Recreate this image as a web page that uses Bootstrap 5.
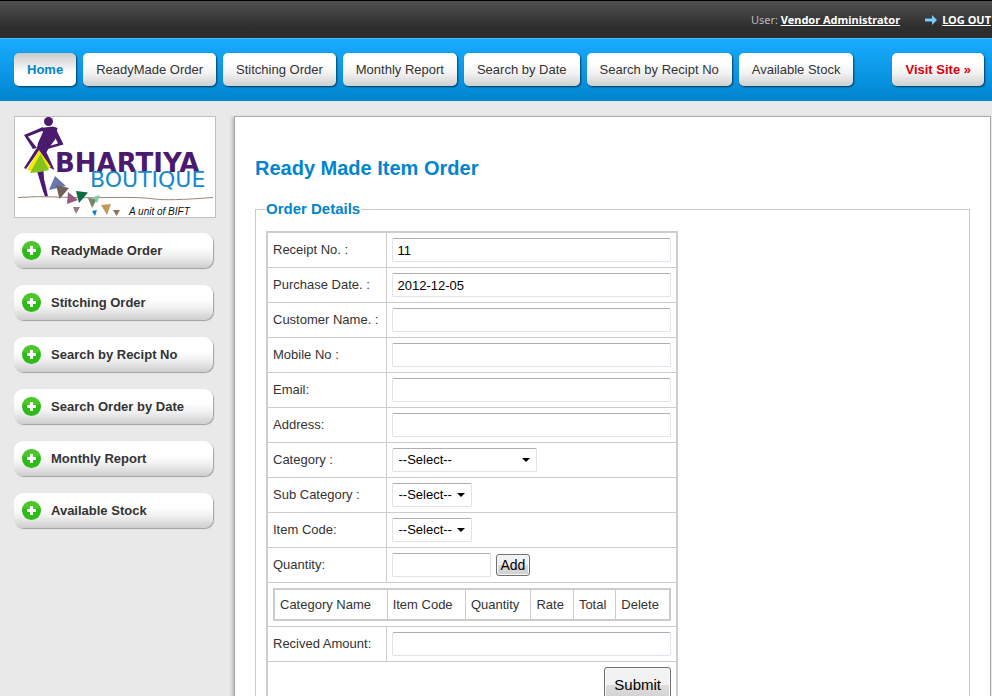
<!DOCTYPE html>
<html lang="en">
<head>
<meta charset="utf-8">
<meta name="viewport" content="width=device-width, initial-scale=1">
<title>Bhartiya Boutique - Ready Made Item Order</title>
<link href="https://cdn.jsdelivr.net/npm/bootstrap@5.3.0/dist/css/bootstrap.min.css" rel="stylesheet">
<style>
body { background: #e9e9e9; color: #333; font-family: "Liberation Sans", Arial, sans-serif; font-size: 13px; line-height: 18px; }
.userbar { height: 38px; border-top: 1px solid #000; background: linear-gradient(#505050, #2e2e2e 70%); color: #bbb; font-family: "Noto Sans", Tahoma, sans-serif; font-size: 11px; padding-right: 1px; }
.userbar a { color: #fff; font-weight: 700; text-decoration: underline; }
.mainnav { height: 63px; border-top: 1px solid #3fc0ff; background: linear-gradient(#19acff, #0085cf); padding: 0 8px 1px 14px; }
.tabs { gap: 7px; }
.tab-btn { height: 33px; line-height: 34px; padding: 0 13px; border-radius: 5px; background: linear-gradient(#fff 30%, #f3f3f3 60%, #cfcfcf); box-shadow: 1px 1px 2px rgba(0,0,0,.6); color: #333; text-decoration: none; white-space: nowrap; }
.tab-btn.current { background: linear-gradient(#c9c9c9, #fff 60%); color: #0085cf; font-weight: 700; }
.tab-btn.site { color: #d9000b; font-weight: 700; }
.page-body { padding: 15px 1px 0 14px; gap: 18px; }
.sidebar { width: 202px; }
.logo-box { border: 1px solid #bfbfbf; background: #fff; margin-bottom: 15px; }
.side-list { gap: 17px; padding-right: 3px; }
.side-btn { height: 35px; padding: 0 0 0 8px; gap: 10px; border-radius: 9px; background: linear-gradient(#fff 40%, #f1f1f1 65%, #cecece); box-shadow: 1px 1px 1px #a0a0a0; color: #333; font-weight: 700; text-decoration: none; }
.side-btn span { padding-top: 1px; }
.panel { background: #fff; border: 1px solid #aaa; box-shadow: -2px 1px 3px rgba(0,0,0,.2); padding: 39px 20px 40px; min-height: 640px; }
.panel h1 { font-size: 20px; line-height: 24px; font-weight: 700; color: #0085cf; margin-bottom: 19px; }
.panel fieldset { border: 1px solid #ccc; padding: 0 10px 20px; }
.panel legend { float: none; width: auto; margin: 0 0 12px; padding: 0 1px 0 0; font-size: 15px; line-height: 20px; font-weight: 700; color: #0085cf; }
.order-table { width: 412px; border: 2px solid #ccc; border-collapse: collapse; }
.order-table td, .order-table th { border: 1px solid #ccc; padding: 5px; font-weight: 400; text-align: left; }
.order-table .name-col { width: 119px; }
.item-table { width: 100%; border: 2px solid #ccc; border-collapse: collapse; }
.item-table th { height: 31px; }
.field { display: block; width: 100%; height: 24px; padding: 0 5px; border: 1px solid #e2e3ea; border-top-color: #abadb3; border-radius: 2px; background: #fff; color: #000; font-size: 13px; }
.field.qty { width: 99px; }
.qty-row { gap: 5px; }
select.field { appearance: none; width: 80px; padding: 0 0 0 6px; background: url("data:image/svg+xml,%3Csvg xmlns='http://www.w3.org/2000/svg' width='8' height='4'%3E%3Cpath d='M0 0h8L4 4z'/%3E%3C/svg%3E") no-repeat right 6px center; }
select.field.wide { width: 145px; }
.push { border: 1px solid #707070; border-radius: 3px; background: linear-gradient(#f2f2f2 0 50%, #dddddd 50%, #cfcfcf); box-shadow: inset 0 0 0 1px #f8f8f8; color: #000; height: 22px; padding: 0 4px; font-size: 14px; line-height: 18px; }
.push.big { height: 36px; padding: 0 9px; font-size: 15px; border-radius: 3px; }
</style>
</head>
<body>
<header>
  <div class="userbar d-flex justify-content-end align-items-center">
    <span>User: <a href="#">Vendor Administrator</a></span>
    <svg class="ms-4 me-1" width="14" height="10" viewBox="0 0 14 10"><path d="M1 3.500h7V0l5 5-5 5V6.500H1z" fill="#7cc9fb"/></svg>
    <a href="#">LOG OUT</a>
  </div>
  <nav class="mainnav d-flex align-items-center justify-content-between">
    <div class="tabs d-flex">
      <a class="tab-btn current" href="#">Home</a>
      <a class="tab-btn" href="#">ReadyMade Order</a>
      <a class="tab-btn" href="#">Stitching Order</a>
      <a class="tab-btn" href="#">Monthly Report</a>
      <a class="tab-btn" href="#">Search by Date</a>
      <a class="tab-btn" href="#">Search by Recipt No</a>
      <a class="tab-btn" href="#">Available Stock</a>
    </div>
    <a class="tab-btn site" href="#">Visit Site »</a>
  </nav>
</header>

<svg class="d-none" xmlns="http://www.w3.org/2000/svg">
  <symbol id="plus" viewBox="0 0 19 19"><circle cx="9.500" cy="9.500" r="9.500" fill="#2dbb16"/><path d="M.6 7A9.500 9.500 0 0 1 18.400 7Q9.500 9 .6 7z" fill="#58cd2e" opacity=".7"/><path d="M8 5h3v3h3v3h-3v3H8v-3H5V8h3z" fill="#fff"/></symbol>
</svg>

<div class="page-body d-flex">
  <aside class="sidebar flex-shrink-0">
    <div class="logo-box">
      <svg class="d-block w-100" viewBox="0 0 200 100" role="img" aria-label="Bhartiya Boutique">
        <g fill="#4b1a6f">
          <circle cx="33.500" cy="4.500" r="4.500"/>
          <path d="M25 11L38 9.500l4.500 1.500-2 11-6 8-3 5H21l2-9 5-11z"/>
          <path d="M28 10L9 18l9 14 4-1-9-11.500L27 14z"/>
          <path d="M40 10l8.500 17.500L29 33l1.500-3 12.500-3.500L38 16z"/>
          <path d="M21 32h9l9.500 21-8-4L23 35 11 52l-2-1z"/>
          <path d="M22 54h6.500q0 8 2 14l2.500 11.500h-3q-2-5-4-12z"/>
        </g>
        <path d="M24 33L12 53l9 2L36 50z" fill="#f6e800"/>
        <path d="M25.500 37L15 56q9 0 19-3z" fill="#85c31c"/>
        <path d="M3 80.500Q22 79 42 80T95 80.500t45 1.500 58-1.500" fill="none" stroke="#9a8574"/>
        <path d="M40 59l11 10-17 4z" fill="#6877b2"/>
        <path d="M41 68l13 3-9.500 11z" fill="#706058"/>
        <path d="M53 75l10 8-11 4z" fill="#965a7c"/>
        <path d="M61 74l12 1.500L64 86z" fill="#0a6b40"/>
        <path d="M73 81l9 1-5 9z" fill="#77836a"/>
        <path d="M78 80l7-2-3 8z" fill="#80c9ab"/>
        <path d="M58 90h7l-4 7z" fill="#957789"/>
        <path d="M77 94l5-1-2 6z" fill="#087fc0"/>
        <path d="M86 88l10-1-4 11z" fill="#bc9b5c"/>
        <path d="M98 93h7l-3.500 6z" fill="#8d735e"/>
        <text x="40" y="55" font-family="DejaVu Sans, sans-serif" font-weight="700" font-size="26" fill="#4b1a6f">BHARTIYA</text>
        <text x="75" y="70" font-family="DejaVu Sans, sans-serif" font-weight="400" font-size="22" fill="#1688cb">BOUTIQUE</text>
        <text x="114" y="98" font-family="Liberation Sans, Arial, sans-serif" font-style="italic" font-size="10" fill="#111">A unit of BIFT</text>
      </svg>
    </div>
    <nav class="side-list d-flex flex-column">
      <a class="side-btn d-flex align-items-center" href="#"><svg width="19" height="19"><use href="#plus"/></svg><span>ReadyMade Order</span></a>
      <a class="side-btn d-flex align-items-center" href="#"><svg width="19" height="19"><use href="#plus"/></svg><span>Stitching Order</span></a>
      <a class="side-btn d-flex align-items-center" href="#"><svg width="19" height="19"><use href="#plus"/></svg><span>Search by Recipt No</span></a>
      <a class="side-btn d-flex align-items-center" href="#"><svg width="19" height="19"><use href="#plus"/></svg><span>Search Order by Date</span></a>
      <a class="side-btn d-flex align-items-center" href="#"><svg width="19" height="19"><use href="#plus"/></svg><span>Monthly Report</span></a>
      <a class="side-btn d-flex align-items-center" href="#"><svg width="19" height="19"><use href="#plus"/></svg><span>Available Stock</span></a>
    </nav>
  </aside>

  <main class="panel flex-grow-1">
    <h1>Ready Made Item Order</h1>
    <form>
      <fieldset>
        <legend>Order Details</legend>
        <table class="order-table">
          <tr><td class="name-col"><label for="receipt">Receipt No. :</label></td><td><input class="field" id="receipt" type="text" value="11"></td></tr>
          <tr><td><label for="pdate">Purchase Date. :</label></td><td><input class="field" id="pdate" type="text" value="2012-12-05"></td></tr>
          <tr><td><label for="cname">Customer Name. :</label></td><td><input class="field" id="cname" type="text"></td></tr>
          <tr><td><label for="mobile">Mobile No :</label></td><td><input class="field" id="mobile" type="text"></td></tr>
          <tr><td><label for="email">Email:</label></td><td><input class="field" id="email" type="text"></td></tr>
          <tr><td><label for="address">Address:</label></td><td><input class="field" id="address" type="text"></td></tr>
          <tr><td><label for="cat">Category :</label></td><td><select class="field wide" id="cat"><option>--Select--</option></select></td></tr>
          <tr><td><label for="subcat">Sub Category :</label></td><td><select class="field" id="subcat"><option>--Select--</option></select></td></tr>
          <tr><td><label for="item">Item Code:</label></td><td><select class="field" id="item"><option>--Select--</option></select></td></tr>
          <tr><td><label for="qty">Quantity:</label></td><td><div class="qty-row d-flex align-items-center"><input class="field qty" id="qty" type="text"><button class="push" type="button">Add</button></div></td></tr>
          <tr><td colspan="2">
            <table class="item-table">
              <tr><th>Category Name</th><th>Item Code</th><th>Quantity</th><th>Rate</th><th>Total</th><th>Delete</th></tr>
            </table>
          </td></tr>
          <tr><td><label for="amount">Recived Amount:</label></td><td><input class="field" id="amount" type="text"></td></tr>
          <tr><td colspan="2"><div class="d-flex justify-content-end"><button class="push big" type="submit">Submit</button></div></td></tr>
        </table>
      </fieldset>
    </form>
  </main>
</div>
<script src="https://cdn.jsdelivr.net/npm/bootstrap@5.3.0/dist/js/bootstrap.bundle.min.js"></script>
</body>
</html>
